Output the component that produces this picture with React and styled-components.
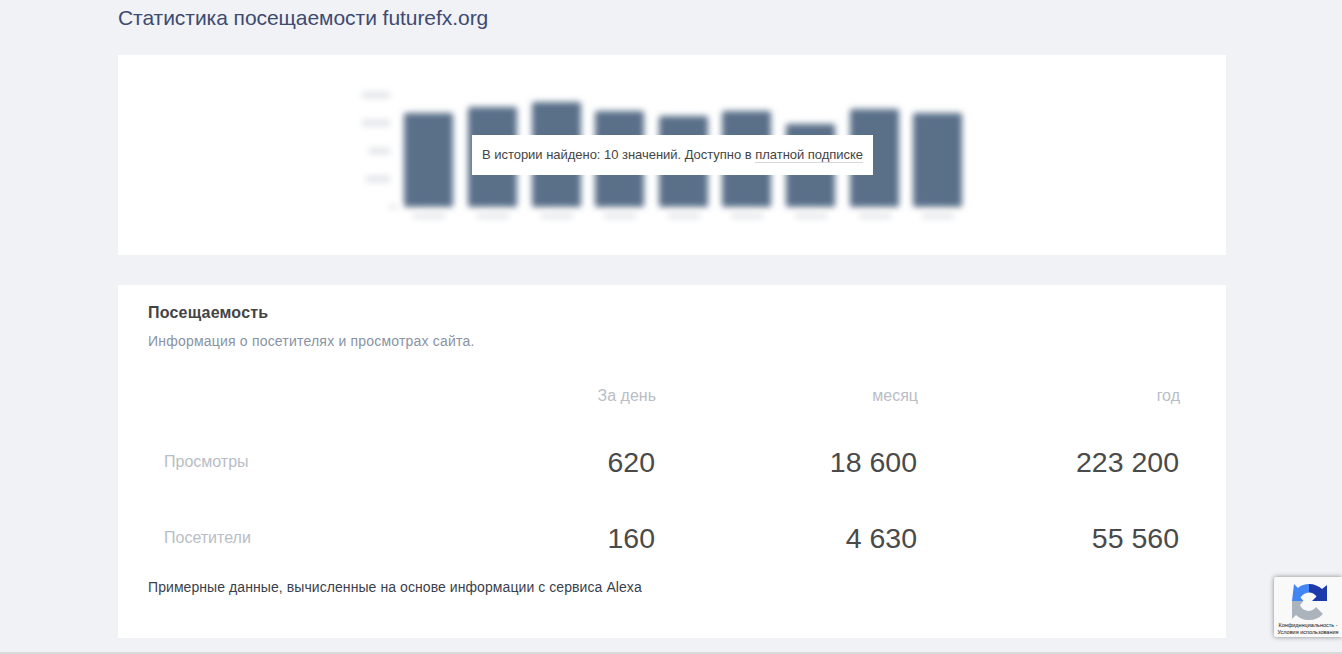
import React from "react";
import styled, { createGlobalStyle } from "styled-components";

const GlobalStyle = createGlobalStyle`
  html, body {
    margin: 0;
    padding: 0;
    height: 654px;
    overflow: hidden;
    background: #f0f2f6;
    font-family: "Liberation Sans", Arial, sans-serif;
  }
`;

const Page = styled.div`
  position: relative;
  height: 652px;
  border-bottom: 2px solid #d8dadc;
`;

const Wrapper = styled.div`
  width: 1108px;
  margin-left: 118px;
`;

const Title = styled.h1`
  margin: 0;
  height: 55px;
  padding-top: 5px;
  box-sizing: border-box;
  font-size: 21px;
  line-height: 25px;
  font-weight: 400;
  letter-spacing: -0.05px;
  color: #3f4a70;
`;

const ChartCard = styled.section`
  position: relative;
  height: 200px;
  background: #fff;
  display: flex;
  justify-content: center;
  margin-bottom: 30px;
`;

const BlurredChart = styled.svg`
  display: block;
  width: 640px;
  height: 200px;
`;

const Notice = styled.div`
  position: absolute;
  top: 80px;
  left: 354px;
  width: 401px;
  height: 40px;
  background: #fff;
  font-size: 13px;
  line-height: 40px;
  letter-spacing: -0.03px;
  text-align: center;
  color: #444;
  white-space: nowrap;
`;

const NoticeLink = styled.a`
  color: #444;
  text-decoration: none;
  border-bottom: 1px solid #d5d8de;
`;

const StatsCard = styled.section`
  height: 353px;
  background: #fff;
  padding: 18px 30px 0;
  box-sizing: border-box;
`;

const SectionTitle = styled.h2`
  margin: 0;
  font-size: 16px;
  line-height: 20px;
  font-weight: 700;
  letter-spacing: 0.2px;
  color: #444;
`;

const SectionLead = styled.p`
  margin: 8px 0 0;
  font-size: 14px;
  line-height: 20px;
  letter-spacing: 0.2px;
  color: #8a93a3;
`;

const StatsTable = styled.div`
  display: grid;
  grid-template-columns: repeat(4, 262px);
  margin-top: 22px;
`;

const HeadCell = styled.div`
  height: 51px;
  line-height: 46px;
  padding: 0 16px;
  font-size: 16px;
  text-align: right;
  color: #b9bdc6;
`;

const RowLabel = styled.div`
  height: 76px;
  line-height: 76px;
  padding: 0 16px;
  font-size: 16px;
  color: #b9bdc6;
`;

const ValueCell = styled.div`
  height: 76px;
  line-height: 76px;
  padding: 0 17px 0 16px;
  font-size: 28.5px;
  text-align: right;
  color: #4a4a4a;
`;

const Note = styled.p`
  margin: 1px 0 0;
  font-size: 14px;
  line-height: 20px;
  letter-spacing: 0.075px;
  color: #3a3f4c;
`;

const RecaptchaBadge = styled.div`
  position: absolute;
  left: 1274px;
  top: 577px;
  width: 68px;
  height: 60px;
  background: #f9f9f9;
  border-radius: 2px 0 0 2px;
  box-shadow: 0 0 5px rgba(0, 0, 0, 0.45);
  overflow: hidden;
`;

const RecaptchaIcon = styled.svg`
  display: block;
  width: 38px;
  height: 38px;
  margin: 6px 0 0 16px;
`;

const RecaptchaText = styled.div`
  margin-top: 1px;
  font-size: 5.5px;
  line-height: 7px;
  text-align: center;
  color: #111;
  white-space: nowrap;
`;

const bars = [
  [52, 113],
  [116, 107],
  [180, 102],
  [243, 111],
  [307, 116],
  [370, 111],
  [434, 124],
  [498, 109],
  [561, 113],
];

const ticks = [
  [10, 95, 28],
  [10, 123, 28],
  [17, 151, 21],
  [14, 179, 24],
];

const columns = ["", "За день", "месяц", "год"];

const rows = [
  { label: "Просмотры", values: ["620", "18 600", "223 200"] },
  { label: "Посетители", values: ["160", "4 630", "55 560"] },
];

const App = () => {
  return (
    <Page>
      <GlobalStyle />
      <Wrapper>
        <Title>Статистика посещаемости futurefx.org</Title>
        <ChartCard>
          <BlurredChart viewBox="0 0 640 200">
            <defs>
              <filter id="soft" x="-20%" y="-20%" width="140%" height="140%">
                <feGaussianBlur stdDeviation="3" />
              </filter>
            </defs>
            <g filter="url(#soft)">
              {bars.map(([x, top]) => (
                <rect key={x} x={x} y={top - 55} width="49" height={207 - top} rx="2" fill="#5a7089" />
              ))}
              {bars.map(([x]) => (
                <rect key={x} x={x + 9} y="158" width="32" height="6" fill="#e6e8ec" />
              ))}
              {ticks.map(([x, y, w]) => (
                <rect key={y} x={x} y={y - 58} width={w} height="6" fill="#dfe2e7" />
              ))}
              <rect x="36" y="150" width="10" height="4" fill="#e6e8ec" />
            </g>
          </BlurredChart>
          <Notice>
            В истории найдено: 10 значений. Доступно в <NoticeLink href="#">платной подписке</NoticeLink>
          </Notice>
        </ChartCard>
        <StatsCard>
          <SectionTitle>Посещаемость</SectionTitle>
          <SectionLead>Информация о посетителях и просмотрах сайта.</SectionLead>
          <StatsTable>
            {columns.map((c, i) => (
              <HeadCell key={i}>{c}</HeadCell>
            ))}
            {rows.map((r) => (
              <React.Fragment key={r.label}>
                <RowLabel>{r.label}</RowLabel>
                {r.values.map((v, i) => (
                  <ValueCell key={i}>{v}</ValueCell>
                ))}
              </React.Fragment>
            ))}
          </StatsTable>
          <Note>Примерные данные, вычисленные на основе информации с сервиса Alexa</Note>
        </StatsCard>
      </Wrapper>
      <RecaptchaBadge>
        <RecaptchaIcon viewBox="0 0 38 38">
          <path d="M19 1C24 1 29 3 32 6L37 2V18H22L26.5 13.5A10 10 0 0 0 19 9.5Z" fill="#1c3aa9" />
          <path d="M19 1C15 1 11 2 8 5L4 1L2 18H13.5L10.5 14.5A11 11 0 0 1 19 9.5Z" fill="#4285f4" />
          <path d="M2 18H13.5L10 22A10 10 0 0 0 19 28A10 10 0 0 0 26 24L33 31A19 19 0 0 1 19 37A18 18 0 0 1 6 32L2 36Z" fill="#abb4bd" />
        </RecaptchaIcon>
        <RecaptchaText>
          Конфиденциальность -
          <br />
          Условия использования
        </RecaptchaText>
      </RecaptchaBadge>
    </Page>
  );
};

export default App;
